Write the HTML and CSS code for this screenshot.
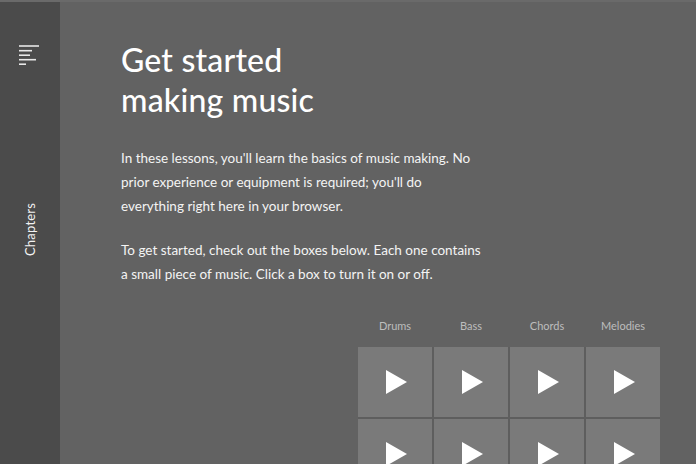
FILE: index.html
```html
<!DOCTYPE html>
<html>
<head>
<meta charset="utf-8">
<link rel="stylesheet" href="styles.css">
</head>
<body>
<div class="app">
  <aside class="sidebar">
    <button class="menu" aria-label="Menu">
      <svg width="22" height="22" viewBox="0 0 22 22">
        <g stroke="#e8e8e8" stroke-width="1.6">
          <line x1="0" y1="1" x2="20" y2="1"/>
          <line x1="0" y1="5.7" x2="13" y2="5.7"/>
          <line x1="0" y1="10.2" x2="11" y2="10.2"/>
          <line x1="0" y1="14.7" x2="17" y2="14.7"/>
          <line x1="0" y1="19.2" x2="7" y2="19.2"/>
        </g>
      </svg>
    </button>
    <div class="chapters">Chapters</div>
  </aside>
  <main class="main">
    <h1 class="title">Get started<br>making music</h1>
    <p class="lead">In these lessons, you'll learn the basics of music making. No prior experience or equipment is required; you'll do everything right here in your browser.</p>
    <p class="lead">To get started, check out the boxes below. Each one contains a small piece of music. Click a box to turn it on or off.</p>
    <section class="pads">
      <div class="labels">
        <span>Drums</span><span>Bass</span><span>Chords</span><span>Melodies</span>
      </div>
      <div class="grid">
        <div class="pad"><span class="play"></span></div>
        <div class="pad"><span class="play"></span></div>
        <div class="pad"><span class="play"></span></div>
        <div class="pad"><span class="play"></span></div>
        <div class="pad"><span class="play"></span></div>
        <div class="pad"><span class="play"></span></div>
        <div class="pad"><span class="play"></span></div>
        <div class="pad"><span class="play"></span></div>
      </div>
    </section>
  </main>
</div>
</body>
</html>
```
FILE: styles.css
```css
html, body {
  margin: 0;
  padding: 0;
  height: 100%;
  overflow: hidden;
  background: #626262;
  font-family: "Lato", "Noto Sans", sans-serif;
  color: #ffffff;
}
.app {
  display: flex;
  height: 464px;
  overflow: hidden;
  border-top: 2px solid #6a6a6a;
  box-sizing: border-box;
}
.sidebar {
  width: 60px;
  flex: none;
  background: #4b4b4b;
  display: flex;
  flex-direction: column;
  align-items: center;
  margin-top: -2px;
  border-top: 2px solid #505050;
}
.menu {
  margin-top: 43px;
  margin-left: -1px;
  padding: 0;
  border: 0;
  background: none;
  width: 22px;
  height: 22px;
  display: block;
}
.chapters {
  margin-top: 136px;
  writing-mode: vertical-rl;
  transform: rotate(180deg);
  font-size: 13px;
  letter-spacing: 0.2px;
  color: #f2f2f2;
}
.main {
  flex: 1;
  padding: 0 36px 0 61px;
  display: flex;
  flex-direction: column;
  overflow: hidden;
}
.title {
  margin: 38px 0 26px;
  font-size: 32px;
  line-height: 40px;
  font-weight: 500;
  letter-spacing: 0.2px;
}
.lead {
  margin: 0 0 20px;
  width: 363px;
  font-size: 13.5px;
  line-height: 24px;
  color: #f4f4f4;
}
.pads {
  align-self: flex-end;
  width: 302px;
  margin-top: 13px;
  flex: none;
}
.labels {
  display: grid;
  grid-template-columns: repeat(4, 74px);
  column-gap: 2px;
  font-size: 11px;
  color: #bdbdbd;
  text-align: center;
  margin-bottom: 15px;
}
.grid {
  display: grid;
  grid-template-columns: repeat(4, 74px);
  grid-auto-rows: 70px;
  gap: 2px;
  background: #5e5e5e;
}
.pad {
  background: #7a7a7a;
  display: flex;
  align-items: center;
  justify-content: center;
}
.play {
  width: 0;
  height: 0;
  border-top: 12px solid transparent;
  border-bottom: 12px solid transparent;
  border-left: 21px solid #ffffff;
  margin-left: 3px;
}
```
